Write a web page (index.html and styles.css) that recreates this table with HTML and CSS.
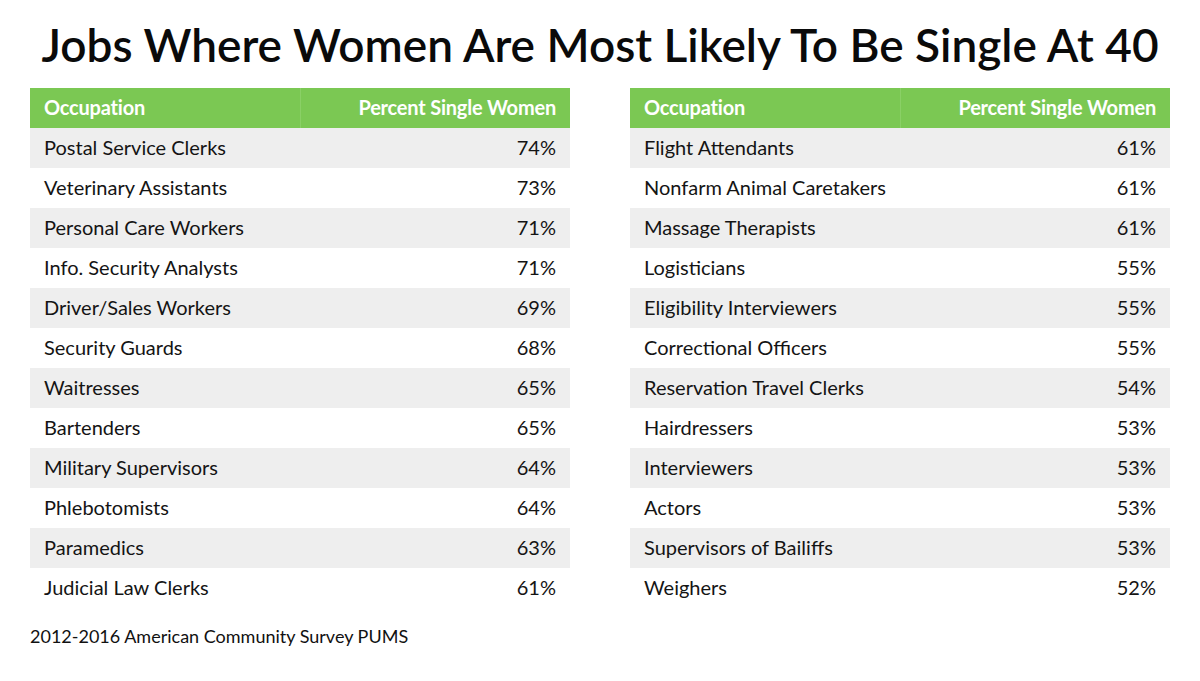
FILE: index.html
```html
<!DOCTYPE html>
<html>
<head>
<meta charset="utf-8">
<link rel="stylesheet" href="styles.css">
</head>
<body>
<div class="page">
  <h1 class="title">Jobs Where Women Are Most Likely To Be Single At 40</h1>
  <div class="tables">
    <table class="data">
      <thead><tr><th class="occ">Occupation</th><th class="pct">Percent Single Women</th></tr></thead>
      <tbody>
        <tr><td class="occ">Postal Service Clerks</td><td class="pct">74%</td></tr>
        <tr><td class="occ">Veterinary Assistants</td><td class="pct">73%</td></tr>
        <tr><td class="occ">Personal Care Workers</td><td class="pct">71%</td></tr>
        <tr><td class="occ">Info. Security Analysts</td><td class="pct">71%</td></tr>
        <tr><td class="occ">Driver/Sales Workers</td><td class="pct">69%</td></tr>
        <tr><td class="occ">Security Guards</td><td class="pct">68%</td></tr>
        <tr><td class="occ">Waitresses</td><td class="pct">65%</td></tr>
        <tr><td class="occ">Bartenders</td><td class="pct">65%</td></tr>
        <tr><td class="occ">Military Supervisors</td><td class="pct">64%</td></tr>
        <tr><td class="occ">Phlebotomists</td><td class="pct">64%</td></tr>
        <tr><td class="occ">Paramedics</td><td class="pct">63%</td></tr>
        <tr><td class="occ">Judicial Law Clerks</td><td class="pct">61%</td></tr>
      </tbody>
    </table>
    <table class="data">
      <thead><tr><th class="occ">Occupation</th><th class="pct">Percent Single Women</th></tr></thead>
      <tbody>
        <tr><td class="occ">Flight Attendants</td><td class="pct">61%</td></tr>
        <tr><td class="occ">Nonfarm Animal Caretakers</td><td class="pct">61%</td></tr>
        <tr><td class="occ">Massage Therapists</td><td class="pct">61%</td></tr>
        <tr><td class="occ">Logisticians</td><td class="pct">55%</td></tr>
        <tr><td class="occ">Eligibility Interviewers</td><td class="pct">55%</td></tr>
        <tr><td class="occ">Correctional Officers</td><td class="pct">55%</td></tr>
        <tr><td class="occ">Reservation Travel Clerks</td><td class="pct">54%</td></tr>
        <tr><td class="occ">Hairdressers</td><td class="pct">53%</td></tr>
        <tr><td class="occ">Interviewers</td><td class="pct">53%</td></tr>
        <tr><td class="occ">Actors</td><td class="pct">53%</td></tr>
        <tr><td class="occ">Supervisors of Bailiffs</td><td class="pct">53%</td></tr>
        <tr><td class="occ">Weighers</td><td class="pct">52%</td></tr>
      </tbody>
    </table>
  </div>
  <p class="source">2012-2016 American Community Survey PUMS</p>
</div>
</body>
</html>
```
FILE: styles.css
```css
html, body {
  margin: 0;
  padding: 0;
  background: #ffffff;
}
body {
  font-family: Lato, "Liberation Sans", sans-serif;
  color: #111111;
}
.page {
  width: 1200px;
  height: 681px;
  padding: 0 30px;
  box-sizing: border-box;
}
.title {
  margin: 0;
  padding-top: 17px;
  height: 88px;
  box-sizing: border-box;
  text-align: center;
  font-size: 46px;
  font-weight: 600;
  line-height: 56px;
  color: #0a0a0a;
  white-space: nowrap;
}
.tables {
  display: flex;
  gap: 60px;
}
.data {
  width: 540px;
  border-collapse: collapse;
  table-layout: fixed;
}
.data th, .data td {
  height: 40px;
  padding: 0 14px 2px 14px;
  box-sizing: border-box;
  font-size: 20px;
  white-space: nowrap;
}
.data th {
  background: #7bc853;
  color: #ffffff;
  font-weight: 700;
  letter-spacing: -0.2px;
}
.data th.occ {
  border-right: 1px solid #8ad066;
}
.data .occ {
  width: 270px;
  text-align: left;
}
.data .pct {
  text-align: right;
}
.data td {
  font-weight: 400;
  color: #141414;
}
.data tbody tr:nth-child(odd) td {
  background: #eeeeee;
}
.source {
  margin: 0;
  padding-top: 17px;
  font-size: 18px;
  line-height: 22px;
  color: #111111;
}
```
